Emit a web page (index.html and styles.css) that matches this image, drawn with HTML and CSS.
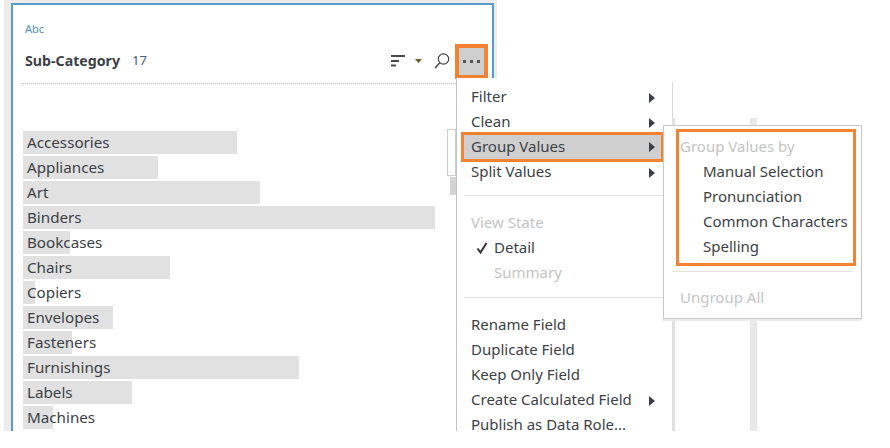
FILE: index.html
```html
<!DOCTYPE html>
<html lang="en">
<head>
<meta charset="utf-8">
<title>Sub-Category</title>
<link rel="stylesheet" href="styles.css">
</head>
<body>
<div class="stage">
  <div class="frame">
    <section class="panel">
      <div class="type">Abc</div>
      <header class="head">
        <span class="name">Sub-Category</span>
        <span class="count">17</span>
        <div class="tools">
          <svg class="sort" width="14" height="12" viewBox="0 0 14 12"><path d="M0 1h14M0 6h8M0 10.500h5" stroke="#4a4a4a" stroke-width="2" fill="none"/></svg>
          <svg class="caret" width="7" height="4" viewBox="0 0 7 4"><path d="M0 0h7L3.500 4z" fill="#6b5a2c"/></svg>
          <svg class="lens" width="16" height="16" viewBox="0 0 16 16"><circle cx="9.500" cy="6" r="5.200" stroke="#444" stroke-width="1.200" fill="none"/><path d="M5.800 9.800L1 15" stroke="#444" stroke-width="1.400" fill="none"/></svg>
          <div class="more"><i></i><i></i><i></i></div>
        </div>
      </header>
      <div class="rule"></div>
      <ul class="bars">
        <li class="row"><span class="bar" style="width:214px"></span><span class="label">Accessories</span></li>
        <li class="row"><span class="bar" style="width:135px"></span><span class="label">Appliances</span></li>
        <li class="row"><span class="bar" style="width:237px"></span><span class="label">Art</span></li>
        <li class="row"><span class="bar" style="width:412px"></span><span class="label">Binders</span></li>
        <li class="row"><span class="bar" style="width:47px"></span><span class="label">Bookcases</span></li>
        <li class="row"><span class="bar" style="width:147px"></span><span class="label">Chairs</span></li>
        <li class="row"><span class="bar" style="width:12px"></span><span class="label">Copiers</span></li>
        <li class="row"><span class="bar" style="width:90px"></span><span class="label">Envelopes</span></li>
        <li class="row"><span class="bar" style="width:49px"></span><span class="label">Fasteners</span></li>
        <li class="row"><span class="bar" style="width:276px"></span><span class="label">Furnishings</span></li>
        <li class="row"><span class="bar" style="width:109px"></span><span class="label">Labels</span></li>
        <li class="row"><span class="bar" style="width:30px"></span><span class="label">Machines</span></li>
      </ul>
    </section>
  </div>

  <div class="scroll"></div>
  <div class="rule-a"></div>
  <div class="rule-b"></div>

  <nav class="menu">
    <div class="item">Filter<span class="arrow"></span></div>
    <div class="item">Clean<span class="arrow"></span></div>
    <div class="item active">Group Values<span class="arrow"></span></div>
    <div class="item">Split Values<span class="arrow"></span></div>
    <hr class="sep">
    <div class="item off">View State</div>
    <div class="item sub"><svg class="check" width="12" height="12" viewBox="0 0 12 12"><path d="M1.500 6.500L4.500 10.500L10.500 1" stroke="#333" stroke-width="2" fill="none"/></svg>Detail</div>
    <div class="item sub off">Summary</div>
    <hr class="sep">
    <div class="item">Rename Field</div>
    <div class="item">Duplicate Field</div>
    <div class="item">Keep Only Field</div>
    <div class="item">Create Calculated Field<span class="arrow"></span></div>
    <div class="item">Publish as Data Role...</div>
  </nav>

  <nav class="submenu">
    <div class="callout">
      <div class="item off">Group Values by</div>
      <div class="item sub">Manual Selection</div>
      <div class="item sub">Pronunciation</div>
      <div class="item sub">Common Characters</div>
      <div class="item sub">Spelling</div>
    </div>
    <hr class="sep">
    <div class="item off">Ungroup All</div>
  </nav>
</div>
</body>
</html>
```

FILE: styles.css
```css
* { box-sizing: border-box; }
html, body { margin: 0; padding: 0; background: #fff; }
body { font-family: "Noto Sans", "Open Sans", sans-serif; color: #3c3f46; }

.stage { position: relative; width: 890px; height: 431px; background: #fff; }
.frame { height: 431px; margin-left: 4px; width: 493px; padding: 3px 3px 0 7px; background: #ececec; }

.panel { height: 428px; border: 2px solid #5b9bc8; border-bottom: 0; background: #fff; overflow: hidden; }
.type { margin: 17px 0 0 12px; font-size: 11px; line-height: 14px; color: #4f8fc0; }
.head { display: flex; align-items: center; height: 24px; margin: 13px 0 0 12px; }
.name { padding-bottom: 2px; font-size: 14.200px; font-weight: 700; color: #3d3f46; }
.count { padding-bottom: 2px; margin-left: 12px; font-size: 13px; color: #4c5f74; }
.tools { margin-left: auto; display: flex; align-items: center; height: 24px; }
.sort { margin-right: 10px; }
.caret { margin-right: 12px; }
.lens { margin-right: 5px; }
.more { flex: none; width: 33px; height: 35px; margin-right: 4px; background: #cfcfcf; border: 4px solid #f58233; display: flex; align-items: center; justify-content: center; gap: 4px; }
.more i { width: 3px; height: 3px; background: #555; display: block; }

.rule { margin: 10px 0 0 8px; border-top: 1px dotted #bdbdbd; }
.bars { list-style: none; margin: 46px 0 0 10px; padding: 0; }
.row { position: relative; height: 25px; padding: 1px 0 0 4px; line-height: 23px; }
.bar { position: absolute; left: 0; top: 1px; height: 23px; background: #e1e1e1; }
.label { position: relative; font-size: 15.200px; color: #3c3f46; }

.scroll { position: absolute; left: 447px; top: 129px; width: 9px; height: 47px; background: #fff; border: 1px solid #cfcfcf; }
.scroll::after { content: ""; position: absolute; left: 2px; top: 47px; width: 6px; height: 18px; background: #d4d4d4; }

.rule-a { position: absolute; left: 672px; top: 82px; width: 1px; height: 349px; background: #d8d8d8; }
.rule-a::after { content: ""; position: absolute; left: 0; top: 36px; bottom: 0; width: 3px; background: #e0e0e0; }
.rule-b { position: absolute; left: 750px; top: 118px; width: 7px; height: 313px; background: #e8e8e8; }

.menu { position: absolute; left: 456px; top: 78px; width: 216px; height: 353px; padding-top: 6px; background: #fff; border-left: 1px solid #c4c4c4; }
.item { position: relative; height: 25px; padding-left: 14px; font-size: 15px; line-height: 25px; white-space: nowrap; color: #3c3f46; }
.menu .item.active { margin-left: 4px; width: 203px; padding-left: 7px; height: 30px; margin-top: -2px; margin-bottom: -3px; line-height: 22px; background: #cfcfcf; border: 3px solid #f58233; }
.off { color: #c4c4c4; }
.sub { padding-left: 37px; }
.check { position: absolute; left: 19px; top: 7px; }
.arrow { position: absolute; left: 192px; top: 9px; width: 0; height: 0; border-left: 6px solid #3c3f46; border-top: 5px solid transparent; border-bottom: 5px solid transparent; }
.active .arrow { left: 185px; top: 7px; }
.sep { height: 0; margin: 0 0 0 7px; border: 0; border-top: 1px solid #e3e3e3; }
.menu .sep { width: 205px; }
.menu .sep:nth-of-type(1) { margin-top: 11px; margin-bottom: 14px; }
.menu .sep:nth-of-type(2) { margin-top: 12px; margin-bottom: 14px; }

.submenu { position: absolute; left: 663px; top: 125px; width: 199px; height: 194px; background: #fff; border: 1px solid #c8c8c8; box-shadow: 0 2px 0 #ececec; }
.callout { margin: 3px 0 0 12px; width: 180px; height: 137px; padding-top: 2px; border: 3px solid #f58233; }
.callout .item { padding-left: 1px; }
.callout .item.sub { padding-left: 24px; }
.submenu .sep { margin: 5px 8px 0 8px; }
.submenu > .item { margin-top: 13px; padding-left: 16px; }
```
